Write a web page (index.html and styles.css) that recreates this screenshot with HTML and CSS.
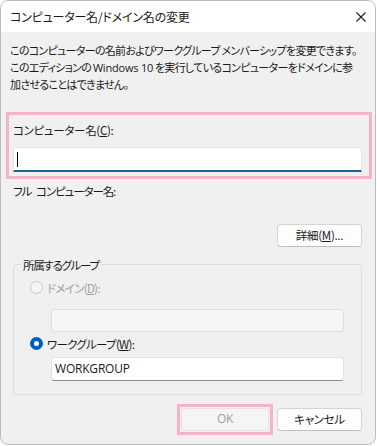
FILE: index.html
```html
<!DOCTYPE html>
<html lang="ja">
<head>
<meta charset="utf-8">
<title>コンピューター名/ドメイン名の変更</title>
<link rel="stylesheet" href="styles.css">
</head>
<body>
<div class="window">
  <div class="titlebar">
    <span class="title">コンピューター名/ドメイン名の変更</span>
    <svg class="close" width="10" height="10" viewBox="0 0 10 10"><path d="M0.5 0.5 L9.5 9.5 M9.5 0.5 L0.5 9.5" stroke="#1b1b1b" stroke-width="1.1" fill="none"/></svg>
  </div>
  <div class="content">
    <p class="desc">このコンピューターの名前およびワークグループ&#x20;メンバーシップを変更できます。<br>このエディションの&#x20;<span class="latin">Windows 10</span>&#x20;を実行しているコンピューターをドメインに参<br>加させることはできません。</p>
    <div class="highlight">
      <div class="label">コンピューター名(<u>C</u>):</div>
      <div class="input active"><span class="caret"></span></div>
    </div>
    <div class="label fullname">フル<span class="gap"></span>コンピューター名:</div>
    <div class="row-right">
      <button class="btn more">詳細(<u>M</u>)...</button>
    </div>
    <fieldset class="group">
      <legend>所属するグループ</legend>
      <div class="radio-row disabled"><span class="radio"></span><span>ドメイン(<u>D</u>):</span></div>
      <div class="input sub disabled-input"></div>
      <div class="radio-row"><span class="radio checked"></span><span>ワークグループ(<u>W</u>):</span></div>
      <div class="input sub normal">WORKGROUP</div>
    </fieldset>
    <div class="footer">
      <span class="ok-highlight"><button class="btn ok" disabled>OK</button></span>
      <button class="btn cancel">キャンセル</button>
    </div>
  </div>
</div>
</body>
</html>
```
FILE: styles.css
```css
html, body {
  margin: 0;
  padding: 0;
  background: #ffffff;
}
body {
  font-family: "Noto Sans CJK JP", "Open Sans", sans-serif;
  font-size: 11.5px;
  line-height: 16px;
  letter-spacing: -0.3px;
  color: #1a1a1a;
  font-feature-settings: "palt" 1;
}
.window {
  box-sizing: border-box;
  width: 376px;
  height: 445px;
  border: 1px solid #bcbcbc;
  border-radius: 8px;
  background: #f0f0f0;
  overflow: hidden;
}
.titlebar {
  height: 31px;
  background: #ffffff;
  display: flex;
  align-items: center;
  justify-content: space-between;
  padding: 0 9px 0 9px;
}
.title {
  font-size: 12px;
  letter-spacing: -0.2px;
}
.content {
  padding: 10px 13px 0 12px;
}
.desc {
  margin: 0 0 0 -3px;
  font-size: 11px;
  letter-spacing: -0.7px;
  line-height: 16.5px;
  white-space: nowrap;
}
.latin {
  font-family: "Open Sans", "Noto Sans CJK JP", sans-serif;
  letter-spacing: -0.2px;
}
.highlight {
  box-sizing: border-box;
  margin: 19px -10px 0 -7px;
  border: 3px solid #f5b3c9;
  padding: 7px 7px 4px 4px;
}
.label {
  height: 16px;
}
.input {
  box-sizing: border-box;
  background: #ffffff;
  border: 1px solid #e3e3e3;
  border-bottom-color: #8c8c8c;
  border-radius: 3px;
}
.input.active {
  margin-top: 9px;
  height: 25px;
  border-color: #e6e6e6;
  border-bottom: 2px solid #1f6396;
  border-radius: 3px 3px 0 0;
  padding: 4px 0 0 3px;
}
.caret {
  display: inline-block;
  width: 1px;
  height: 15px;
  background: #000;
  vertical-align: top;
}
.fullname {
  margin-top: 4px;
  letter-spacing: -1.1px;
}
.fullname .gap {
  display: inline-block;
  width: 5px;
}
.row-right {
  display: flex;
  justify-content: flex-end;
  margin-top: 25px;
}
.btn {
  box-sizing: border-box;
  font: inherit;
  letter-spacing: inherit;
  font-feature-settings: "palt" 1;
  color: #1a1a1a;
  background: #fdfdfd;
  border: 1px solid #d4d4d4;
  border-bottom-color: #bdbdbd;
  border-radius: 4px;
  height: 23px;
  padding: 0;
  margin: 0;
  flex: none;
}
.more {
  width: 85px;
}
.group {
  margin: 10px 0 0 0;
  padding: 0 17px 13px 16px;
  border: 1px solid #dcdcdc;
  border-radius: 3px;
  min-width: 0;
}
.group legend {
  margin-left: -9px;
  padding: 0 2px;
  line-height: 16px;
  letter-spacing: -1.3px;
}
.radio-row {
  display: flex;
  align-items: center;
  gap: 4px;
  height: 16px;
  letter-spacing: -0.7px;
}
.group legend + .radio-row {
  margin-top: 7px;
}
.radio {
  box-sizing: border-box;
  width: 13px;
  height: 13px;
  border-radius: 50%;
  border: 1px solid #c8c8c8;
  background: #f5f5f5;
}
.radio.checked {
  border: 4px solid #005fb8;
  background: #ffffff;
}
.radio-row.disabled {
  color: #a0a0a0;
}
.input.sub {
  margin-left: 21px;
}
.disabled-input {
  margin-top: 13px;
  height: 23px;
  background: #f6f6f6;
  border-color: #dedede;
}
.disabled-input + .radio-row {
  margin-top: 4px;
}
.input.normal {
  margin-top: 5px;
  height: 24px;
  padding: 3px 0 0 3px;
  line-height: 16px;
  font-family: "Open Sans", "Noto Sans CJK JP", sans-serif;
  font-size: 12px;
  letter-spacing: -0.2px;
}
.footer {
  display: flex;
  justify-content: flex-end;
  align-items: center;
  gap: 4px;
  margin-top: 9px;
}
.ok-highlight {
  display: block;
  border: 3px solid #f5b3c9;
  padding: 1px;
}
.ok {
  width: 88px;
  display: block;
  color: #a0a0a0;
  background: #f5f5f5;
  border-color: #e3e3e3;
  font-family: "Open Sans", "Noto Sans CJK JP", sans-serif;
  font-size: 12px;
}
.cancel {
  width: 85px;
}
```
